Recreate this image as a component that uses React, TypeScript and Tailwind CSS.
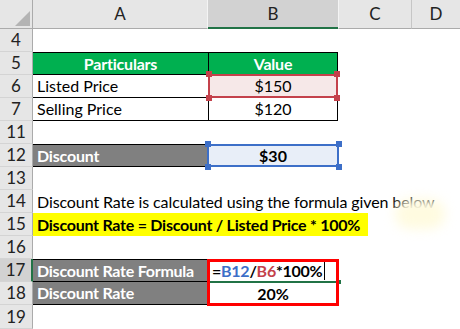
import React from "react";

const F = { fontFamily: "Lato, 'Liberation Sans', sans-serif" };

function RowHead({ n, h = "h-[23px]", active = false }: { n: string; h?: string; active?: boolean }) {
  return (
    <div
      className={`${h} w-[33px] shrink-0 flex items-center justify-center text-[17px] text-[#222] border-b border-b-[#d4d4d4] ${
        active ? "bg-[#d2d2d2] border-r-2 border-r-[#217346]" : "bg-[#e6e6e6] border-r border-r-[#ababab]"
      }`}
    >
      {n}
    </div>
  );
}

function Handle({ pos, color }: { pos: string; color: string }) {
  return <div className={`absolute w-[6px] h-[6px] ${pos} ${color}`} />;
}

export default function App() {
  return (
    <div className="w-[460px] h-[329px] bg-white overflow-hidden relative text-black" style={F}>
      {/* column header */}
      <div className="flex h-[29px]">
        <div className="w-[33px] h-[29px] bg-[#e6e6e6] border-r border-r-[#ababab] border-b border-b-[#ababab] relative">
          <svg className="absolute left-[15px] top-[11px]" width="15" height="15" viewBox="0 0 15 15">
            <polygon points="15,0 15,15 0,15" fill="#b4b4b4" />
          </svg>
        </div>
        <div className="w-[175px] bg-[#e6e6e6] border-b border-b-[#ababab] border-r border-r-[#f4f4f4] flex items-center justify-center text-[17px] text-[#222]">A</div>
        <div className="w-[130px] bg-[#d2d2d2] border-b-2 border-b-[#217346] flex items-center justify-center text-[17px] text-[#222]">B</div>
        <div className="w-[74px] bg-[#e6e6e6] border-b border-b-[#ababab] border-l border-l-[#f4f4f4] border-r border-r-[#c6c6c6] flex items-center justify-center text-[17px] text-[#222]">C</div>
        <div className="flex-1 bg-[#e6e6e6] border-b border-b-[#ababab] flex items-center justify-center text-[17px] text-[#222]">D</div>
      </div>

      {/* row 4 */}
      <div className="flex"><RowHead n="4" /><div className="flex-1" /></div>

      {/* row 5 */}
      <div className="flex">
        <RowHead n="5" />
        <div className="w-[175px] h-[23px] bg-[#00b050] border-t border-b border-black text-white font-bold text-[16px] tracking-[-0.2px] flex items-center justify-center">Particulars</div>
        <div className="w-[130px] h-[23px] bg-[#00b050] border border-black text-white font-bold text-[16px] tracking-[-0.2px] flex items-center justify-center">Value</div>
      </div>

      {/* row 6 */}
      <div className="flex">
        <RowHead n="6" />
        <div className="w-[175px] h-[23px] border-b border-black text-[16px] flex items-center pl-[4px]">Listed Price</div>
        <div className="w-[130px] h-[23px] border-l border-r border-b border-black text-[16px] flex items-center justify-center relative bg-[#f6e8e8]">
          <div className="absolute -left-[1px] -top-[1px] -right-[1px] -bottom-[1px] border-2 border-[#c4414b]" />
          <Handle pos="-left-[3px] -top-[4px]" color="bg-[#c4414b]" />
          <Handle pos="-right-[3px] -top-[4px]" color="bg-[#c4414b]" />
          <Handle pos="-left-[3px] -bottom-[4px]" color="bg-[#c4414b]" />
          <Handle pos="-right-[3px] -bottom-[4px]" color="bg-[#c4414b]" />
          <span className="relative">$150</span>
        </div>
      </div>

      {/* row 7 */}
      <div className="flex">
        <RowHead n="7" />
        <div className="w-[175px] h-[23px] border-b border-black text-[16px] flex items-center pl-[4px]">Selling Price</div>
        <div className="w-[130px] h-[23px] border-l border-r border-b border-black text-[16px] flex items-center justify-center">$120</div>
      </div>

      {/* row 11 */}
      <div className="flex"><RowHead n="11" /><div className="flex-1" /></div>

      {/* row 12 */}
      <div className="flex">
        <RowHead n="12" />
        <div className="w-[175px] h-[23px] bg-[#808080] border-t border-b border-black text-white font-bold text-[16px] tracking-[-0.2px] flex items-center pl-[4px]">Discount</div>
        <div className="w-[130px] h-[23px] text-[16px] font-bold flex items-center justify-center relative bg-[#e8eef8]">
          <div className="absolute -left-[1px] top-0 -right-[1px] bottom-0 border-2 border-[#3d6fc8]" />
          <Handle pos="-left-[3px] -top-[3px]" color="bg-[#3d6fc8]" />
          <Handle pos="-right-[4px] -top-[3px]" color="bg-[#3d6fc8]" />
          <Handle pos="-left-[3px] -bottom-[3px]" color="bg-[#3d6fc8]" />
          <Handle pos="-right-[4px] -bottom-[3px]" color="bg-[#3d6fc8]" />
          <span className="relative">$30</span>
        </div>
      </div>

      {/* row 13 */}
      <div className="flex"><RowHead n="13" /><div className="flex-1" /></div>

      {/* row 14 */}
      <div className="flex">
        <RowHead n="14" />
        <div className="flex-1 h-[23px] text-[16px] tracking-[-0.1px] flex items-center pl-[4px] whitespace-nowrap">Discount Rate is calculated using the formula given below</div>
      </div>

      {/* row 15 */}
      <div className="flex">
        <RowHead n="15" />
        <div className="flex-1 h-[23px] relative">
          <div className="h-[23px] w-[335px] bg-[#ffff00] text-[16px] font-bold tracking-[-0.25px] flex items-center pl-[4px] whitespace-nowrap">Discount Rate = Discount / Listed Price * 100%</div>
          <div className="absolute left-[362px] top-[-14px] w-[50px] h-[30px] rounded-full bg-[#fffbe0] blur-[6px]" />
        </div>
      </div>

      {/* row 16 */}
      <div className="flex"><RowHead n="16" /><div className="flex-1" /></div>

      {/* rows 17-18 */}
      <div className="flex">
        <div className="flex flex-col">
          <RowHead n="17" active />
          <RowHead n="18" />
        </div>
        <div className="flex flex-col w-[175px]">
          <div className="h-[23px] bg-[#808080] border-t border-b border-black text-white font-bold text-[16px] tracking-[-0.25px] flex items-center pl-[4px]">Discount Rate Formula</div>
          <div className="h-[23px] bg-[#808080] border-b border-black text-white font-bold text-[16px] tracking-[-0.25px] flex items-center pl-[4px]">Discount Rate</div>
        </div>
        <div className="w-[130px] flex flex-col relative">
          <div className="h-[23px] text-[16px] font-bold tracking-[-0.25px] flex items-center pl-[4px] relative">
            <span>=</span>
            <span className="text-[#3d6fc8]">B12</span>
            <span>/</span>
            <span className="text-[#c4414b]">B6</span>
            <span>*100%</span>
            <span className="ml-[2px] w-[1px] h-[19px] bg-black" />
            <div className="absolute left-0 right-0 bottom-[-1px] h-[2px] bg-[#217346]" />
            <div className="absolute right-[-3px] bottom-[-2px] w-[4px] h-[4px] bg-[#217346]" />
          </div>
          <div className="h-[23px] text-[16px] font-bold flex items-center justify-center">20%</div>
          <div className="absolute -left-[1px] top-0 -right-[1px] h-[47px] border-[3px] border-[#ff0000]" />
        </div>
      </div>

      {/* row 19 */}
      <div className="flex"><RowHead n="19" h="h-[24px]" /><div className="flex-1" /></div>
    </div>
  );
}
